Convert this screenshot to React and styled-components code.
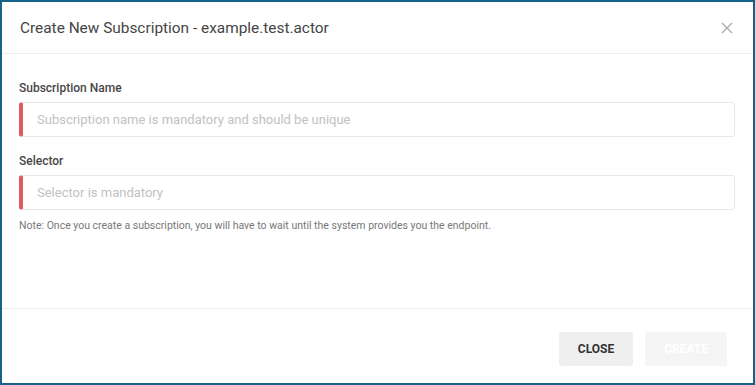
import styled, { createGlobalStyle } from "styled-components";

const GlobalStyle = createGlobalStyle`
  body {
    margin: 0;
    background: #fff;
    font-family: Roboto, "Liberation Sans", Arial, sans-serif;
  }
`;

const Dialog = styled.div`
  width: 755px;
  height: 385px;
  box-sizing: border-box;
  border: 2px solid #17628a;
  background: #fff;
  display: flex;
  flex-direction: column;
`;

const Header = styled.div`
  height: 51px;
  display: flex;
  align-items: center;
  justify-content: space-between;
  padding: 0 20px 0 18px;
  border-bottom: 1px solid #ececec;
`;

const Title = styled.h2`
  margin: 0;
  font-size: 15.4px;
  font-weight: 400;
  color: #454545;
`;

const CloseIcon = styled.button`
  border: none;
  background: none;
  padding: 0;
  width: 12px;
  height: 12px;
  display: flex;
  cursor: pointer;
`;

const Body = styled.div`
  flex: 1;
  padding: 26px 18px 0 17px;
  border-bottom: 1px solid #ececec;
`;

const Label = styled.label`
  display: block;
  font-size: 12px;
  font-weight: 500;
  line-height: 16px;
  color: #474747;
  margin-top: ${(p) => (p.$first ? "0" : "16px")};
  margin-bottom: 6px;
`;

const Input = styled.input`
  display: block;
  width: 100%;
  height: 35px;
  box-sizing: border-box;
  border: 1px solid #e8e8e8;
  border-left: 4px solid #e05a5a;
  border-radius: 3px;
  padding: 0 14px;
  font-family: inherit;
  font-size: 13px;
  color: #333;
  outline: none;

  &::placeholder {
    color: #c2c2c2;
  }
`;

const Note = styled.p`
  margin: 9px 0 0;
  font-size: 10.5px;
  line-height: 14px;
  color: #777;
`;

const Footer = styled.div`
  height: 74px;
  box-sizing: border-box;
  display: flex;
  justify-content: flex-end;
  align-items: flex-start;
  gap: 12px;
  padding: 23px 26px 0 0;
`;

const Button = styled.button`
  height: 34px;
  padding: 0 19px;
  border: none;
  border-radius: 3px;
  background: ${(p) => (p.disabled ? "#f5f5f5" : "#efefef")};
  color: ${(p) => (p.disabled ? "#fff" : "#333")};
  font-family: inherit;
  font-size: 12px;
  font-weight: 700;
  text-transform: uppercase;
`;

export default function App() {
  return (
    <>
      <GlobalStyle />
      <Dialog>
        <Header>
          <Title>Create New Subscription - example.test.actor</Title>
          <CloseIcon aria-label="close">
            <svg width="12" height="12" viewBox="0 0 12 12">
              <path d="M1 1L11 11M11 1L1 11" stroke="#aaa" strokeWidth="1.3" fill="none" />
            </svg>
          </CloseIcon>
        </Header>
        <Body>
          <Label $first>Subscription Name</Label>
          <Input placeholder="Subscription name is mandatory and should be unique" />
          <Label>Selector</Label>
          <Input placeholder="Selector is mandatory" />
          <Note>
            Note: Once you create a subscription, you will have to wait until the system provides you the endpoint.
          </Note>
        </Body>
        <Footer>
          <Button>Close</Button>
          <Button disabled>Create</Button>
        </Footer>
      </Dialog>
    </>
  );
}
